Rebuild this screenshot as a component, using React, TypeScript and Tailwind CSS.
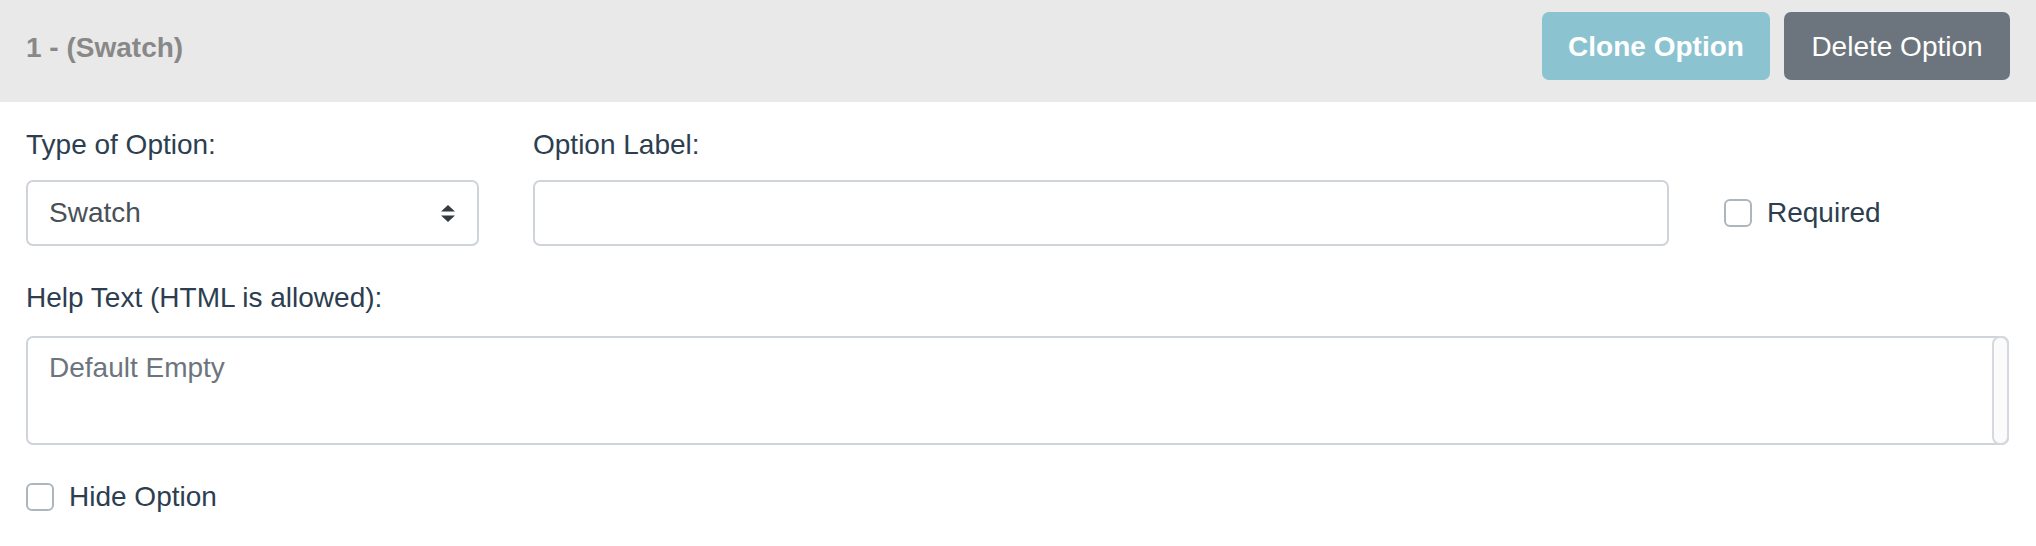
import React from "react";

function Checkbox({ label }: { label: string }) {
  return (
    <label className="flex items-center gap-[15px] leading-[42px]">
      <span className="w-[28px] h-[28px] rounded-[6px] border-2 border-[#adb5bd] bg-white" />
      <span>{label}</span>
    </label>
  );
}

export default function App() {
  return (
    <div className="min-h-screen w-[2036px] bg-white text-[28px] text-[#2c3e50] font-['Liberation_Sans',Arial,sans-serif]">
      {/* Header bar */}
      <div className="h-[102px] bg-[#e9e9e9] flex items-start justify-between pl-[26px] pr-[26px] pt-[12px]">
        <div className="font-bold text-[#888888] leading-[68px] pt-[2px]">1 - (Swatch)</div>
        <div className="flex gap-[14px]">
          <button className="w-[228px] h-[68px] rounded-[7px] bg-[#8bc4d0] text-white font-bold pt-[2px]">
            Clone Option
          </button>
          <button className="w-[226px] h-[68px] rounded-[7px] bg-[#6c757d] text-white pt-[2px]">
            Delete Option
          </button>
        </div>
      </div>

      <div className="px-[26px] pt-[22px]">
        {/* Type / Label / Required */}
        <div className="flex items-end">
          <div className="w-[453px]">
            <div className="leading-[42px] mb-[14px]">Type of Option:</div>
            <div className="h-[66px] border-2 border-[#ced4da] rounded-[7px] px-[21px] flex items-center justify-between text-[#495057]">
              <span>Swatch</span>
              <svg width="14" height="17" viewBox="0 0 14 17" className="mr-[1px]">
                <path d="M7 0 L14 6.5 L0 6.5 Z" fill="#343a40" />
                <path d="M0 10.5 L14 10.5 L7 17 Z" fill="#343a40" />
              </svg>
            </div>
          </div>
          <div className="w-[1136px] ml-[54px]">
            <div className="leading-[42px] mb-[14px]">Option Label:</div>
            <div className="h-[66px] border-2 border-[#ced4da] rounded-[7px]" />
          </div>
          <div className="ml-[55px] h-[66px] flex items-center">
            <Checkbox label="Required" />
          </div>
        </div>

        {/* Help text */}
        <div className="mt-[31px]">
          <div className="leading-[42px] mb-[17px]">Help Text (HTML is allowed):</div>
          <div className="relative w-[1983px] h-[109px] border-2 border-[#ced4da] rounded-[7px] px-[21px] pt-[9px] leading-[42px] text-[#6c757d]">
            Default Empty
            <div className="absolute right-[-2px] top-[-2px] bottom-[-2px] w-[17px] rounded-[8px] border-2 border-[#d5d9dd] bg-[#fbfbfb]" />
          </div>
        </div>

        {/* Hide option */}
        <div className="mt-[31px]">
          <Checkbox label="Hide Option" />
        </div>
      </div>
    </div>
  );
}
